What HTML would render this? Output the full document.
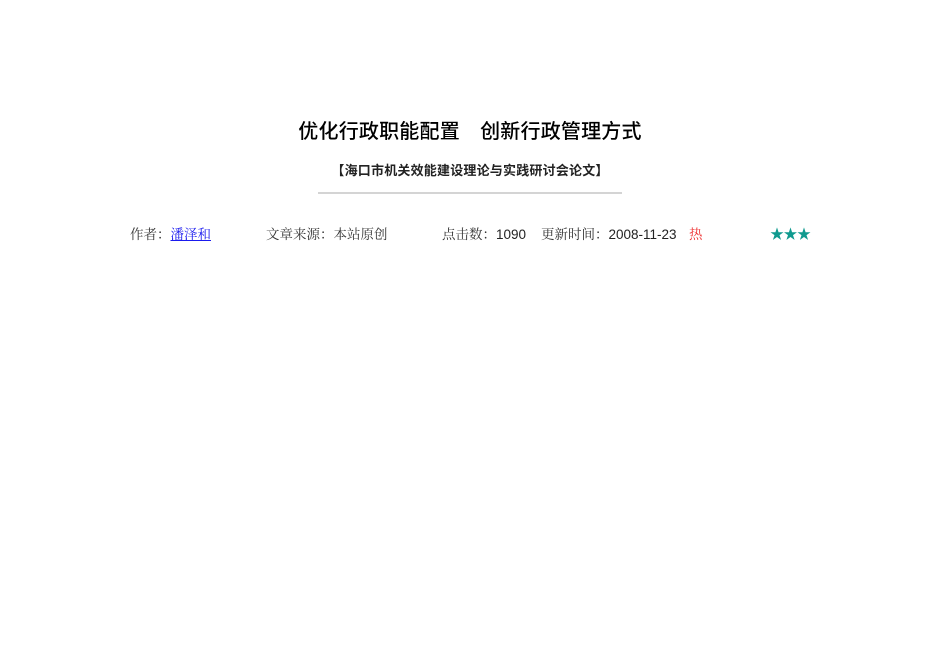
<!DOCTYPE html>
<html><head><meta charset="utf-8"><style>
body{margin:0;width:950px;height:672px;background:#fff;position:relative;font-family:"Liberation Sans","Noto Sans CJK SC",sans-serif;color:#000}
.a{position:absolute;white-space:nowrap}
.s{font-family:"Noto Serif CJK SC",serif;font-size:13.5px;color:#333}
.n{font-family:'Liberation Sans',sans-serif;color:#222;font-size:13.5px}
</style></head><body>
<div class="a" style="left:0;width:940px;top:117px;text-align:center;font-size:20px;font-weight:500;line-height:26px;letter-spacing:0.2px;font-family:'Noto Sans CJK SC',sans-serif">优化行政职能配置&emsp;创新行政管理方式</div>
<div class="a" style="left:0;width:940px;top:162px;text-align:center;font-size:13px;font-weight:bold;line-height:18px;color:#222;letter-spacing:0.2px">【海口市机关效能建设理论与实践研讨会论文】</div>
<div class="a" style="left:318px;width:304px;top:192px;height:2px;background:#d4d4d4"></div>
<div class="a s" style="left:130px;top:224px;line-height:18px">作者：<span style="color:#1a1aee;text-decoration:underline">潘泽和</span></div>
<div class="a s" style="left:266px;top:224px;line-height:18px">文章来源：本站原创</div>
<div class="a s" style="left:442px;top:224px;line-height:18px">点击数：<span class="n">1090</span></div>
<div class="a s" style="left:541px;top:224px;line-height:18px">更新时间：<span class="n">2008-11-23</span></div>
<div class="a s" style="left:689px;top:224px;line-height:18px;color:#e33">热</div>
<div class="a" style="left:770px;top:225px;line-height:18px;font-size:14px;color:#109a8f;letter-spacing:-0.5px">★★★</div>
</body></html>
